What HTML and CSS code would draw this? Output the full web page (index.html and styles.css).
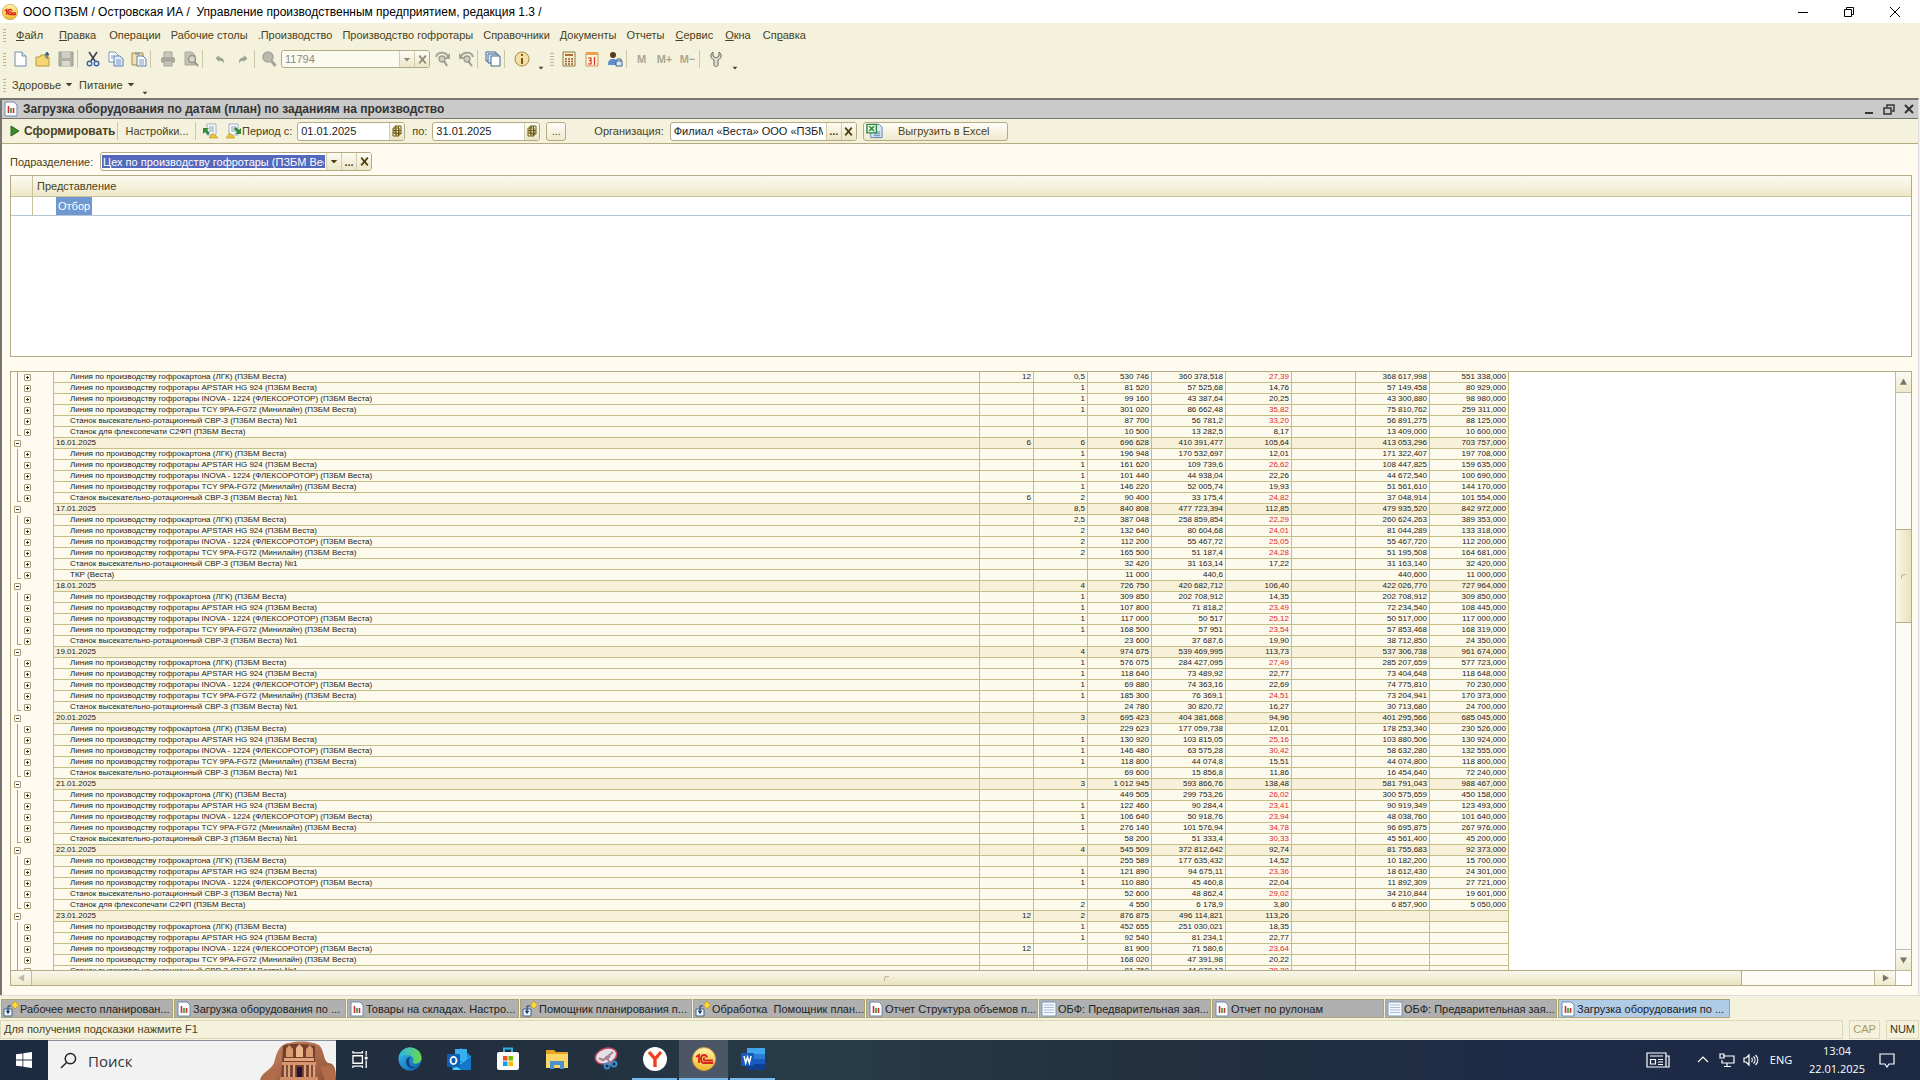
FILE: index.html
```html
<!DOCTYPE html>
<html lang="ru">
<head>
<meta charset="utf-8">
<title>Управление производственным предприятием, редакция 1.3</title>
<link rel="stylesheet" href="styles.css">
</head>
<body>
<svg class="sprite" aria-hidden="true">
  <defs>
    <linearGradient id="gold" x1="0" y1="0" x2="0" y2="1"><stop offset="0" stop-color="#fff3b0"/><stop offset="1" stop-color="#f0b92c"/></linearGradient>
    <linearGradient id="edgeBlue" x1="0" y1="0" x2="1" y2="1"><stop offset="0" stop-color="#35c1f1"/><stop offset="1" stop-color="#0c59a4"/></linearGradient>
    <linearGradient id="edgeGreen" x1="0" y1="0" x2="1" y2="0"><stop offset="0" stop-color="#2fb7e9"/><stop offset="1" stop-color="#6ad84a"/></linearGradient>
    <linearGradient id="rock" x1="0" y1="0" x2="1" y2="1"><stop offset="0" stop-color="#c98560"/><stop offset="1" stop-color="#8f5238"/></linearGradient>
  </defs>
  <symbol id="i-1c" viewBox="0 0 24 24"><circle cx="12" cy="12" r="11.500" fill="url(#gold)" stroke="#c99a35" stroke-width="1"/><path d="M4 10l3-2v8M15 10.500c-.4-1.600-1.500-2.500-2.800-2.500-2 0-3.200 1.700-3.200 4s1.300 4 3.200 4h9M13 11.200c-1.600-.6-1.800 2.300 0 2.300h8" fill="none" stroke="#d8261c" stroke-width="1.900"/></symbol>
  <symbol id="i-doc" viewBox="0 0 16 16"><path d="M3 1h7l4 4v10H3z" fill="#fff" stroke="#6f8cb0"/><path d="M10 1v4h4" fill="#d6e3f3" stroke="#6f8cb0"/></symbol>
  <symbol id="i-open" viewBox="0 0 16 16"><path d="M1 6h4l1-2h4v2h4v9H1z" fill="#f4d774" stroke="#b89a3c"/><path d="M12 8V3M10 4l2-3 2 3z" fill="#3b5f85" stroke="#3b5f85"/></symbol>
  <symbol id="i-save" viewBox="0 0 16 16"><path d="M1 1h14v14H1z" fill="#b0b0a6" stroke="#9c9c90"/><path d="M4 1h8v6H4z" fill="#cfcfc5"/><path d="M4 10h8v5H4z" fill="#d8d8ce"/></symbol>
  <symbol id="i-cut" viewBox="0 0 16 16"><path d="M4 1l6 9M12 1L6 10" stroke="#3c4656" stroke-width="1.600" fill="none"/><circle cx="4.500" cy="12.500" r="2.300" fill="none" stroke="#3567a8" stroke-width="1.400"/><circle cx="11.500" cy="12.500" r="2.300" fill="none" stroke="#3567a8" stroke-width="1.400"/></symbol>
  <symbol id="i-copy" viewBox="0 0 16 16"><path d="M1 1h6l3 3v7H1z" fill="#fff" stroke="#7b98bd"/><path d="M6 5h6l3 3v7H6z" fill="#e6eefa" stroke="#5a7fb0"/><path d="M8 9h5M8 11h5M8 13h5M3 5h3M3 7h2" stroke="#7b98bd"/></symbol>
  <symbol id="i-paste" viewBox="0 0 16 16"><path d="M1 2h11v12H1z" fill="#f0e2b4" stroke="#a98a3c"/><path d="M4 1h5v3H4z" fill="#9aa5b5"/><path d="M6 5h6l3 3v7H6z" fill="#fff" stroke="#5a7fb0"/><path d="M8 9h5M8 11h5M8 13h5" stroke="#7b98bd"/></symbol>
  <symbol id="i-print" viewBox="0 0 16 16"><path d="M4 1h8v6H4z" fill="#c9c9be" stroke="#a3a398"/><rect x="1" y="6" width="14" height="6" rx="2" fill="#a8a89d"/><path d="M4 10h8v5H4z" fill="#c3c3b7" stroke="#a3a398"/></symbol>
  <symbol id="i-preview" viewBox="0 0 16 16"><path d="M2 1h7l3 3v10H2z" fill="#c3c3b6" stroke="#a8a89c"/><circle cx="9" cy="8" r="3.500" fill="#d6d6ca" stroke="#96968a" stroke-width="1.500"/><path d="M11.500 11l3.500 4" stroke="#96968a" stroke-width="2"/></symbol>
  <symbol id="i-undo" viewBox="0 0 16 16"><path d="M2 7l5-4v3c5 0 7 3 6 8-1-3-3-4-6-4v2z" fill="#9aa58c"/></symbol>
  <symbol id="i-redo" viewBox="0 0 16 16"><path d="M14 7L9 3v3c-5 0-7 3-6 8 1-3 3-4 6-4v2z" fill="#9aa58c"/></symbol>
  <symbol id="i-find" viewBox="0 0 16 16"><circle cx="7" cy="6" r="5" fill="#b9b9ad" stroke="#a5a59a" stroke-width="1.500"/><path d="M10.500 10l4 5" stroke="#a5a59a" stroke-width="3"/></symbol>
  <symbol id="i-findnext" viewBox="0 0 16 16"><circle cx="7" cy="8" r="3" fill="#d0d0c4" stroke="#9a9a8e" stroke-width="1.300"/><path d="M9 10l3 5" stroke="#9a9a8e" stroke-width="2"/><path d="M1 6c1-5 9-6 12-1" fill="none" stroke="#a2a698" stroke-width="2"/><path d="M15 2v6H9z" fill="#a2a698"/></symbol>
  <symbol id="i-findprev" viewBox="0 0 16 16"><circle cx="9" cy="8" r="3" fill="#d0d0c4" stroke="#9a9a8e" stroke-width="1.300"/><path d="M10 10l4 5" stroke="#9a9a8e" stroke-width="2"/><path d="M15 6C14 1 6 0 3 5" fill="none" stroke="#a2a698" stroke-width="2"/><path d="M1 2v6h6z" fill="#a2a698"/></symbol>
  <symbol id="i-windows" viewBox="0 0 16 16"><path d="M1 1h10v9H1z" fill="#eef4fb" stroke="#41658f"/><path d="M3 3h10v9H3z" fill="#dce9f7" stroke="#41658f"/><path d="M6 5h9v10H6z" fill="#fff" stroke="#41658f"/></symbol>
  <symbol id="i-info" viewBox="0 0 16 16"><circle cx="8" cy="8" r="7" fill="#f6dfa4" stroke="#a8893c"/><path d="M8 3v2M8 7v6" stroke="#7a5a16" stroke-width="2"/></symbol>
  <symbol id="i-calc" viewBox="0 0 16 16"><path d="M2 1h12v14H2z" fill="#f8f0cc" stroke="#8a7a3a"/><path d="M4 3h8v2H4z" fill="#b36a3a"/><path d="M4 8h8M4 10.500h8M4 13h8" stroke="#8a4a2a" stroke-width="1.400" stroke-dasharray="1.800 1.300"/></symbol>
  <symbol id="i-cal" viewBox="0 0 16 16"><path d="M2 2h12v13H2z" fill="#fff4dc" stroke="#d3954c"/><path d="M2 1h12v3H2z" fill="#e8a450"/><path d="M4 7h3v2.500H5M7 9v4H4M10.500 6v8" stroke="#d03020" fill="none" stroke-width="1.200"/></symbol>
  <symbol id="i-user" viewBox="0 0 16 16"><circle cx="6" cy="4" r="3" fill="#5a3a1c"/><path d="M1 14c0-5 2-6 5-6s5 1 5 6z" fill="#5a8fcc"/><path d="M9 10h6v5H9z" fill="#d8e6f5" stroke="#41658f"/><path d="M10 10V8h4v2" stroke="#41658f" fill="none"/></symbol>
  <symbol id="i-wrench" viewBox="0 0 16 16"><path d="M5 1v4l3 2 3-2V1c3 2 3 6-1 8v5c0 2-4 2-4 0V9C2 7 2 3 5 1z" fill="#deded4" stroke="#6a6a60"/></symbol>
  <symbol id="i-report" viewBox="0 0 16 16"><path d="M2 1h9l3 3v11H2z" fill="#fff" stroke="#6f8cb0"/><path d="M5.500 5v7" stroke="#d22c2c" stroke-width="1.600"/><path d="M8 7v5" stroke="#2f9a3c" stroke-width="1.600"/><path d="M10.500 7v5" stroke="#d22c2c" stroke-width="1.600"/></symbol>
  <symbol id="i-list" viewBox="0 0 16 16"><path d="M1 1h14v14H1z" fill="#f4f8fd" stroke="#7b98bd"/><path d="M3 4h10M3 6.500h10M3 9h10M3 11.500h10" stroke="#a9bdd6"/></symbol>
  <symbol id="i-proc" viewBox="0 0 16 16"><path d="M1 8h8v7H1z" fill="#eef4fb" stroke="#41658f"/><path d="M5 5v6M3.500 10l1.500 2.500L6.500 10zM5 5h3" stroke="#1f3c66" fill="#1f3c66"/><path d="M12 0l3.500 4L12 8 8.500 4z" fill="#ffd93b" stroke="#b8912a" stroke-width=".8"/></symbol>
  <symbol id="i-play" viewBox="0 0 10 12"><path d="M1 1l8 5-8 5z" fill="#3c8a2a" stroke="#2c641e"/></symbol>
  <symbol id="i-load" viewBox="0 0 16 16"><path d="M5 1h9v11H5z" fill="#f7fbff" stroke="#9ab0c8"/><path d="M7 4h5M7 6h5M7 8h5" stroke="#8aa0b8"/><path d="M1 5h6L5 7l3 3-2 2-3-3-2 2z" fill="#2f8a3c"/><path d="M7 15l4-5 5 5z" fill="#f2c230" stroke="#b98d1a" stroke-width=".6"/></symbol>
  <symbol id="i-store-settings" viewBox="0 0 16 16"><path d="M3 1h9v11H3z" fill="#f7fbff" stroke="#9ab0c8"/><path d="M5 4h5M5 6h5M5 8h5" stroke="#8aa0b8"/><path d="M15 11H9l2-2-3-3 2-2 3 3 2-2z" fill="#2f8a3c"/><path d="M0 15l4-5 5 5z" fill="#f2c230" stroke="#b98d1a" stroke-width=".6"/></symbol>
  <symbol id="i-grid" viewBox="0 0 10 12"><path d="M3 1h6v8H3zM1 3h6v8H1zM1 5.500h8M1 8h8M4 1v10M6.500 1v10" fill="none" stroke="#6b5a10" stroke-width="1"/></symbol>
  <symbol id="i-x" viewBox="0 0 10 10"><path d="M2 1.500l6 7M8 1.500l-6 7" stroke="currentColor" stroke-width="1.600"/></symbol>
  <symbol id="i-down" viewBox="0 0 10 6"><path d="M1 1h8L5 5.500z" fill="currentColor"/></symbol>
  <symbol id="i-excel" viewBox="0 0 18 16"><path d="M7 1h7l3 3v11H5V5" fill="#dfeaf8" stroke="#5a7fb0"/><path d="M8 9h7M8 11h7M8 13h7" stroke="#5a7fb0"/><path d="M1 1h10v9H1z" fill="#e3f3e0" stroke="#2f8a3c" stroke-width="1.500"/><path d="M3.500 3l5 5M8.500 3l-5 5" stroke="#2f8a3c" stroke-width="1.600"/></symbol>
</svg>

<header class="titlebar">
  <svg class="ico16"><use href="#i-1c"/></svg>
  <h1>ООО ПЗБМ / Островская ИА /&nbsp; Управление производственным предприятием, редакция 1.3 /</h1>
  <div class="winbtns">
    <button aria-label="Свернуть"><svg viewBox="0 0 10 10"><path d="M0 5.500h10"/></svg></button>
    <button aria-label="Восстановить"><svg viewBox="0 0 10 10"><path d="M.5 2.500h7v7h-7zM2.500 2.500v-2h7v7h-2"/></svg></button>
    <button aria-label="Закрыть"><svg viewBox="0 0 10 10"><path d="M0 0l10 10M10 0L0 10"/></svg></button>
  </div>
</header>

<nav class="menubar">
  <button class="first"><u>Ф</u>айл</button><button class="first"><u>П</u>равка</button><button>Операции</button><button>Рабочие столы</button><button>.Производство</button><button>Производство гофротары</button><button>Справочники</button><button><u>Д</u>окументы</button><button>Отчеты</button><button class="accel"><u>С</u>ервис</button><button class="accel"><u>О</u>кна</button><button class="accel">Сп<u>р</u>авка</button>
</nav>

<div class="toolbar">
  <button aria-label="Новый"><svg><use href="#i-doc"/></svg></button>
  <button aria-label="Открыть"><svg><use href="#i-open"/></svg></button>
  <button aria-label="Сохранить"><svg><use href="#i-save"/></svg></button>
  <i class="sep"></i>
  <button aria-label="Вырезать"><svg><use href="#i-cut"/></svg></button>
  <button aria-label="Копировать"><svg><use href="#i-copy"/></svg></button>
  <button aria-label="Вставить"><svg><use href="#i-paste"/></svg></button>
  <i class="sep wide"></i>
  <button aria-label="Печать"><svg><use href="#i-print"/></svg></button>
  <button aria-label="Просмотр"><svg><use href="#i-preview"/></svg></button>
  <i class="sep wide"></i>
  <button aria-label="Отменить"><svg class="small"><use href="#i-undo"/></svg></button>
  <button aria-label="Вернуть"><svg class="small"><use href="#i-redo"/></svg></button>
  <i class="sep"></i>
  <button class="narrow" aria-label="Найти"><svg><use href="#i-find"/></svg></button>
  <div class="field search"><input aria-label="Поиск" value="11794" disabled><button aria-label="Список" disabled><svg class="dd"><use href="#i-down"/></svg></button><button aria-label="Очистить" disabled><svg class="x"><use href="#i-x"/></svg></button></div>
  <button aria-label="Найти далее"><svg><use href="#i-findnext"/></svg></button>
  <button aria-label="Найти ранее"><svg><use href="#i-findprev"/></svg></button>
  <i class="sep"></i>
  <button aria-label="Окна"><svg><use href="#i-windows"/></svg></button>
  <i class="sep wide"></i>
  <button aria-label="Справка"><svg><use href="#i-info"/></svg></button>
  <button class="more" aria-label="Ещё"><svg class="dd"><use href="#i-down"/></svg></button>
  <i class="grip"></i>
  <button aria-label="Калькулятор"><svg><use href="#i-calc"/></svg></button>
  <button aria-label="Календарь"><svg><use href="#i-cal"/></svg></button>
  <button aria-label="Пользователь"><svg><use href="#i-user"/></svg></button>
  <i class="sep"></i>
  <button class="mem">M</button><button class="mem">M+</button><button class="mem">M−</button>
  <i class="sep wide"></i>
  <button class="narrow" aria-label="Сервис"><svg><use href="#i-wrench"/></svg></button>
  <button class="more" aria-label="Ещё"><svg class="dd"><use href="#i-down"/></svg></button>
</div>

<div class="quickbar">
  <button>Здоровье <svg class="dd"><use href="#i-down"/></svg></button><button>Питание <svg class="dd"><use href="#i-down"/></svg></button><button class="more" aria-label="Ещё"><svg class="dd"><use href="#i-down"/></svg></button>
</div>

<main class="window">
  <header class="window-title">
    <svg class="ico16"><use href="#i-report"/></svg>
    <h2>Загрузка оборудования по датам (план) по заданиям на производство</h2>
    <div class="mdibtns">
      <button aria-label="Свернуть"><svg viewBox="0 0 12 12"><path d="M2 10h8"/></svg></button>
      <button aria-label="Восстановить"><svg class="thin" viewBox="0 0 12 12"><path d="M1 5h7v6H1zM4 4V2h7v6H9"/></svg></button>
      <button aria-label="Закрыть"><svg viewBox="0 0 12 12"><path d="M2 2l8 8M10 2l-8 8"/></svg></button>
    </div>
  </header>

  <form class="commands">
    <button type="button" class="run"><svg><use href="#i-play"/></svg>Сформировать</button>
    <i class="sep"></i>
    <button type="button" class="settings">Настройки...</button>
    <i class="sep"></i>
    <button type="button" class="tool" aria-label="Загрузить"><svg class="ico16"><use href="#i-load"/></svg></button>
    <button type="button" class="tool last" aria-label="Сохранить"><svg class="ico16"><use href="#i-store-settings"/></svg></button>
    <label for="from">Период с:</label>
    <div class="field date"><input id="from" value="01.01.2025"><button type="button" aria-label="Выбрать дату"><svg class="cal"><use href="#i-grid"/></svg></button></div>
    <label for="to" class="to">по:</label>
    <div class="field date"><input id="to" value="31.01.2025"><button type="button" aria-label="Выбрать дату"><svg class="cal"><use href="#i-grid"/></svg></button></div>
    <button type="button" class="push dots">...</button>
    <label for="org">Организация:</label>
    <div class="field org"><input id="org" value="Филиал «Веста» ООО «ПЗБМ»"><button type="button">...</button><button type="button" aria-label="Очистить"><svg class="x"><use href="#i-x"/></svg></button></div>
    <button type="button" class="push excel"><svg><use href="#i-excel"/></svg><span>Выгрузить в Excel</span></button>
  </form>

  <div class="body">
    <div class="filter">
      <label for="dep">Подразделение:</label>
      <div class="field dep"><input id="dep" value="Цех по производству гофротары (ПЗБМ Веста)"><button type="button" aria-label="Список"><svg class="dd"><use href="#i-down"/></svg></button><button type="button">...</button><button type="button" aria-label="Очистить"><svg class="x"><use href="#i-x"/></svg></button></div>
    </div>

    <div class="selection">
      <table>
        <thead><tr><th class="mark"></th><th>Представление</th></tr></thead>
        <tbody><tr><td class="mark"></td><td><span>Отбор</span></td></tr></tbody>
      </table>
    </div>

    <section class="report">
      <div class="sheet">
        <table>
          <colgroup><col class="c-tree"><col class="c-name"><col class="c-a"><col class="c-a"><col class="c-b"><col class="c-c"><col class="c-d"><col class="c-b"><col class="c-c"><col class="c-e"></colgroup>
          <tbody id="rows"></tbody>
        </table>
      </div>
      <div class="vscroll"><button aria-label="Вверх"><svg viewBox="0 0 8 8"><path d="M4 0l4 7H0z"/></svg></button><i class="before"></i><i class="thumb"></i><i class="after"></i><button aria-label="Вниз"><svg viewBox="0 0 8 8"><path d="M4 8l4-7H0z"/></svg></button></div>
      <div class="hscroll"><button class="off" aria-label="Влево"><svg viewBox="0 0 8 8"><path d="M0 4l7-4v8z"/></svg></button><i class="thumb"></i><i class="track"></i><button aria-label="Вправо"><svg viewBox="0 0 8 8"><path d="M8 4L1 0v8z"/></svg></button></div>
      <i class="corner"></i>
    </section>
  </div>
</main>

<nav class="tabs">
  <button><svg><use href="#i-proc"/></svg>Рабочее место планирован...</button>
  <button><svg><use href="#i-report"/></svg>Загрузка оборудования по ...</button>
  <button><svg><use href="#i-report"/></svg>Товары на складах. Настро...</button>
  <button><svg><use href="#i-proc"/></svg>Помощник планирования п...</button>
  <button><svg><use href="#i-proc"/></svg>Обработка&nbsp; Помощник план...</button>
  <button><svg><use href="#i-report"/></svg>Отчет Структура объемов п...</button>
  <button><svg><use href="#i-list"/></svg>ОБФ: Предварительная зая...</button>
  <button><svg><use href="#i-report"/></svg>Отчет по рулонам</button>
  <button><svg><use href="#i-list"/></svg>ОБФ: Предварительная зая...</button>
  <button class="current"><svg><use href="#i-report"/></svg>Загрузка оборудования по ...</button>
</nav>

<div class="status"><p>Для получения подсказки нажмите F1</p><span class="off">CAP</span><span>NUM</span></div>

<footer class="taskbar">
  <button class="start" aria-label="Пуск"><svg viewBox="0 0 16 16"><path d="M0 2.300l6.500-.9v6.200H0zM7.300 1.300L16 0v7.600H7.300zM0 8.400h6.500v6.200L0 13.700zM7.300 8.400H16V16l-8.700-1.300z" fill="#fff"/></svg></button>
  <div class="tasksearch">
    <svg class="lens" viewBox="0 0 18 18"><circle cx="11" cy="7" r="5.500"/><path d="M7 11l-6 6"/></svg>
    <input aria-label="Поиск" placeholder="Поиск">
    <svg class="art" viewBox="0 0 76 39"><path d="M0 39c2-8 10-9 14-17C17 10 20 2 30 2c9-3 26-1 30 3 5 8 3 13 8 17 6 0 8 5 8 17z" fill="url(#rock)"/><path d="M23 5c6-3 20-3 32 0v34H21z" fill="#74402c"/><path d="M24 17h30v3H24z" fill="#e2a57c"/><path d="M22 21h34v3H22z" fill="#d9966e"/><path d="M26 8l3-4 4 4v8h-7zM46 8l4-4 3 4v8h-7z" fill="#d99a72"/><path d="M36 7l3.500-4L43 7v9h-7z" fill="#efb58b"/><path d="M25 24v12M29 24v12M34 24v12M45 24v12M50 24v12M54 24v12" stroke="#dda27b" stroke-width="2.300"/><path d="M20 36h38v3H20z" fill="#d08f68"/><path d="M37 26h5v10h-5z" fill="#25133c"/><path d="M3 39c5-7 9-8 13-16v16zM60 26l5 13h10c0-9-1-13-5-15z" fill="#b26c4a"/></svg>
  </div>
  <div class="apps">
    <button aria-label="Представление задач"><svg class="view" viewBox="0 0 18 18"><path d="M1 5h10v8H1zM1 0v2h10V0M1 18v-2h10v2M15 0v5M15 10v8" fill="none" stroke="#fff" stroke-width="1.400"/><path d="M13.500 6h3v3h-3z" fill="#fff"/></svg></button>
    <button aria-label="Edge"><svg viewBox="0 0 24 24"><circle cx="12" cy="12" r="11.500" fill="url(#edgeBlue)"/><path d="M1 11C2 3 8 .5 12 .5c7 0 12 5 11.500 11-.5 5-6 6-9 4.500 3-5-1-8-5-8-4 0-7 1-8.500 3z" fill="url(#edgeGreen)"/><path d="M8 14c0 5 4 9 11 6-6 1-8-2-8-6 0-2 1-3 2-4-3 0-5 2-5 4z" fill="#123f7c"/></svg></button>
    <button aria-label="Outlook"><svg viewBox="0 0 24 24"><path d="M5 9l9-8 10 8v13H5z" fill="#1a86d8"/><path d="M8 2h12v12H8z" fill="#37b0f0"/><path d="M24 9v14H5l10-8z" fill="#50d0ff"/><path d="M24 9L10 20l4 3h10z" fill="#1279c9"/><rect y="7" width="13" height="13" rx="1" fill="#0f5fb4"/><ellipse cx="6.500" cy="13.500" rx="3" ry="3.600" fill="none" stroke="#fff" stroke-width="1.800"/></svg></button>
    <button aria-label="Магазин"><svg viewBox="0 0 24 24"><path d="M8 6V1.500h8V6" fill="none" stroke="#2fb1e6" stroke-width="2"/><rect x="1" y="5" width="22" height="18" rx="2" fill="#fafafa"/><path d="M7 9h4.500v4.500H7z" fill="#f25022"/><path d="M12.500 9H17v4.500h-4.500z" fill="#7fba00"/><path d="M7 14.500h4.500V19H7z" fill="#00a4ef"/><path d="M12.500 14.500H17V19h-4.500z" fill="#ffb900"/></svg></button>
    <button aria-label="Проводник"><svg viewBox="0 0 24 24"><path d="M1 3h8l2 2h12v16H1z" fill="#e3a523"/><path d="M1 7h22v14H1z" fill="#fcd667"/><path d="M5 22v-8h14v8h-4v-4H9v4z" fill="#4b93cf"/></svg></button>
    <button aria-label="Ножницы"><svg viewBox="0 0 24 24"><ellipse cx="12" cy="9" rx="11" ry="7.500" transform="rotate(-20 12 9)" fill="#e4e2e8" stroke="#c8475c" stroke-width="1.500"/><path d="M5 11c3 3 8 2 11-2M8 14L19 5M12 9l5 9" fill="none" stroke="#a8808e" stroke-width="2"/><circle cx="13" cy="19" r="2.500" fill="none" stroke="#3a8bd0" stroke-width="1.800"/><circle cx="20" cy="17" r="2.500" fill="none" stroke="#3a8bd0" stroke-width="1.800"/></svg></button>
    <button class="open" aria-label="Яндекс Браузер"><svg viewBox="0 0 24 24"><circle cx="12" cy="12" r="12" fill="#fff"/><path d="M6 5l6 7v8M18 5l-6 7" fill="none" stroke="#f0401c" stroke-width="3.400"/></svg></button>
    <button class="open active" aria-label="1С:Предприятие"><svg><use href="#i-1c"/></svg></button>
    <button class="open" aria-label="Word"><svg viewBox="0 0 24 24"><path d="M6 1h18v6H6z" fill="#41a5ee"/><path d="M6 7h18v5H6z" fill="#2b7cd3"/><path d="M6 12h18v5H6z" fill="#185abd"/><path d="M6 17h18v6H6z" fill="#103f91"/><rect y="6" width="13" height="13" rx="1" fill="#185abd"/><path d="M3 9l1.700 7L6.500 10l1.800 6L10 9" fill="none" stroke="#fff" stroke-width="1.500"/></svg></button>
  </div>
  <div class="tray">
    <button class="news" aria-label="Новости"><svg viewBox="0 0 24 16"><path d="M1 1h19v14H1zM20 4h3v11h-4M4 4h13M12 7.500h5M12 10h5M12 12.500h5M4.500 7.500h5v4.500h-5z"/></svg></button>
    <button aria-label="Скрытые значки"><svg viewBox="0 0 16 16"><path d="M3 10l5-5 5 5"/></svg></button>
    <button aria-label="Сеть"><svg viewBox="0 0 16 16"><path d="M4 4h11v7H3V8M8 11v3M5 14.500h7M1 2h4v4H1z"/></svg></button>
    <button aria-label="Громкость"><svg viewBox="0 0 16 16"><path d="M1 6h2l3-3v10l-3-3H1zM8.500 6c1 1 1 3 0 4M10.500 4.500c2 2 2 5 0 7M12.500 3c3 3 3 7 0 10"/></svg></button>
    <span class="lang">ENG</span>
    <time><span>13:04</span><span>22.01.2025</span></time>
    <button class="note" aria-label="Уведомления"><svg viewBox="0 0 16 16"><path d="M1 2h14v10h-5l-2 3-2-3H1z"/></svg></button>
  </div>
</footer>
<script src="report.js"></script>
</body>
</html>
```
FILE: styles.css
```css
* { box-sizing: border-box; }
body {
  margin: 0; height: 100vh; display: flex; flex-direction: column; overflow: hidden;
  background: #f4f1dc; color: #4a4220;
  font: 11px/14px "Liberation Sans", Arial, sans-serif;
}
button, input { font: inherit; color: inherit; margin: 0; padding: 0; border: 0; background: none; }
button { display: flex; align-items: center; justify-content: center; white-space: nowrap; flex: none; }
svg { display: block; flex: none; }
h1, h2, p { margin: 0; font: inherit; }
.sprite { position: absolute; width: 0; height: 0; }
.ico16 { width: 16px; height: 16px; }
.dd { width: 8px; height: 5px; }
.x { width: 11px; height: 11px; }

.titlebar { display: flex; align-items: center; gap: 5px; height: 23px; padding-left: 2px; background: #fff; color: #000; flex: none; }
.titlebar h1 { font-size: 12px; flex: 1; }
.winbtns { display: flex; padding-right: 2px; }
.winbtns button { width: 46px; height: 20px; }
.winbtns svg { width: 10px; height: 10px; fill: none; stroke: #000; overflow: visible; }

.menubar { display: flex; align-items: center; height: 24px; padding-left: 8px; flex: none; }
.menubar button { padding: 0 5px; height: 20px; }
.menubar .first { padding: 0 8px; }
.menubar .accel { padding: 0 6px; }
.menubar, .quickbar, .toolbar {
  background: repeating-linear-gradient(#b9b497 0 1px, transparent 1px 3px) 3px 6px / 3px 13px no-repeat;
}
.toolbar { display: flex; align-items: center; height: 24px; padding-left: 8px; flex: none; }
.toolbar > button { width: 23px; height: 22px; }
.toolbar > .narrow { width: 22px; }
.toolbar > button svg { width: 16px; height: 16px; }
.toolbar > button .small { width: 12px; height: 12px; }
.toolbar > .more, .quickbar .more { width: 15px; align-items: flex-end; }
.toolbar > .more .dd, .quickbar .more .dd { width: 6px; height: 4px; }
.toolbar .mem { color: #aaa68f; font-weight: bold; }
.sep { width: 4px; height: 18px; border-left: 1px solid #cbc6a6; flex: none; }
.sep.wide { width: 6px; }
.grip { width: 4px; height: 13px; margin: 0 3px 0 2px; background: repeating-linear-gradient(#b9b497 0 1px, transparent 1px 3px); }
.quickbar { display: flex; align-items: center; height: 27px; padding: 2px 0 2px 12px; flex: none; background-position: 3px 8px; }
.quickbar button { gap: 4px; margin-right: 6px; height: 20px; }
.quickbar .more { width: 8px; }

.field { display: flex; height: 19px; border: 1px solid #b3ab83; border-radius: 3px; background: #fff; color: #1c1c1c; overflow: hidden; }
.field input { flex: 1; min-width: 0; padding: 0 3px; outline: 0; }
.field button { width: 15px; border-left: 1px solid #d3ccab; background: linear-gradient(#fdfcf4, #ece6c8); color: #4d400a; font-weight: bold; }
.search { width: 149px; height: 18px; margin: 0 1px; background: #fbfaf0; color: #8e8a78; }
.search button { color: #8e8a78; }

.window { flex: 1; min-height: 0; display: flex; flex-direction: column; margin: 0 1px 0 0; border: solid #77766e; border-width: 2px 1px 0 2px; border-right-color: #dcdce0; background: #fffbf0; }
.window-title { display: flex; align-items: center; gap: 4px; height: 19px; padding-left: 1px; border-bottom: 1px solid #77766e; background: #cacaca; color: #333; flex: none; }
.window-title h2 { font-size: 12px; font-weight: bold; flex: 1; }
.mdibtns { display: flex; gap: 8px; padding-right: 3px; }
.mdibtns svg { width: 12px; height: 12px; fill: none; stroke: #333; stroke-width: 2; }
.mdibtns .thin { stroke-width: 1.500; }

.commands { display: flex; align-items: center; height: 25px; padding-left: 8px; border-bottom: 1px solid #b3ab83; background: #f4f1dc; flex: none; }
.run { gap: 4px; width: 107px; font-size: 12px; font-weight: bold; justify-content: flex-start; }
.run svg { width: 10px; height: 12px; }
.settings { width: 70px; margin: 0 3px 0 1px; }
.tool { margin: 0 5px 0 3px; }
.tool.last { margin-right: 0; }
.date { width: 108px; margin-left: 5px; }
.cal { width: 10px; height: 12px; }
.to { margin-left: 7px; }
.push { height: 19px; border: 1px solid #b3ab83; border-radius: 3px; background: linear-gradient(#fefdf8, #efe9cd); }
.dots { width: 20px; margin: 0 28px 0 6px; }
.org { width: 187px; margin: 0 6px; }
.excel { width: 145px; padding: 0 2px; }
.excel svg { width: 17px; height: 16px; }
.excel span { flex: 1; }

.body { flex: 1; min-height: 0; display: flex; flex-direction: column; padding: 8px 6px 9px 8px; }
.filter { display: flex; align-items: center; height: 19px; margin-bottom: 4px; flex: none; }
.filter label { width: 90px; }
.dep { width: 272px; }
.dep input { margin: 2px 1px; padding: 0 1px; background: #5468bd; color: #fff; }

.selection { height: 182px; border: 1px solid #b3ab83; background: #fff; flex: none; }
.selection table { width: 100%; border-spacing: 0; table-layout: fixed; }
.selection th { height: 21px; padding: 0 4px; text-align: left; font-weight: normal; border-bottom: 1px solid #c9c19a; background: linear-gradient(#fbfaf1, #eee8c8); }
.selection td { height: 19px; padding: 0 0 0 23px; border-bottom: 1px solid #b6c6d8; }
.selection td span { display: inline-block; padding: 2px; line-height: 14px; background: #6f97d0; color: #fff; }
.selection .mark { width: 22px; padding: 0; border-right: 1px solid #c9c19a; }

.report { flex: 1; min-height: 0; margin-top: 14px; display: grid; grid-template: minmax(0, 1fr) 15px / minmax(0, 1fr) 16px; border: 1px solid #b3ab83; background: #fff; }
.sheet { overflow: hidden; background: linear-gradient(90deg, #fffbf0 42px, #fff 42px); }
.sheet table { width: 1498px; table-layout: fixed; border-spacing: 0; font-size: 8px; line-height: 10px; color: #222; }
.c-tree { width: 43px; } .c-name { width: 926px; } .c-a { width: 54px; } .c-b { width: 64px; }
.c-c { width: 74px; } .c-d { width: 66px; } .c-e { width: 79px; }
.sheet td { height: 11px; padding: 0 2px 0 0; border: solid #c6bd85; border-width: 0 1px 1px 0; background: #fcfaec; text-align: right; white-space: nowrap; overflow: hidden; }
.sheet td.name { text-align: left; padding-left: 16px; }
.sheet .group td { background: #f7f1da; }
.sheet .group td.name { padding-left: 2px; }
.sheet .red { color: #e3262e; }
.sheet tr td.tree { padding: 0; border-bottom: 0; background: #fffbf0; }
.branch { display: flex; height: 11px; padding-left: 3px; align-items: flex-end; }
.rail { width: 4px; height: 11px; margin: 0 3px; border-left: 1px solid #a9a27c; align-self: flex-start; }
.rail.end { height: 9px; border-bottom: 1px solid #a9a27c; }
.toggle { width: 7px; height: 7px; margin-bottom: 2px; border: 1px solid #a39c72; border-radius: 1px; background: linear-gradient(#333, #333) center / 3px 1px no-repeat, #fff; }
.toggle.plus { background: linear-gradient(#333, #333) center / 3px 1px no-repeat, linear-gradient(#333, #333) center / 1px 3px no-repeat, #fff; }

.vscroll { display: flex; flex-direction: column; border-left: 1px solid #c1bb9b; background: #fbfaf5; }
.vscroll button, .hscroll button { background: linear-gradient(#fbfaf4, #eeeacb); }
.vscroll button { height: 21px; border-bottom: 1px solid #c1bb9b; }
.vscroll button:last-child { border-width: 1px 0 0; border-style: solid; border-color: #c1bb9b; }
.vscroll svg, .hscroll svg { width: 7px; height: 8px; fill: #77756a; }
.vscroll .before { flex: 137; }
.vscroll .after { flex: 328; }
.vscroll .thumb { flex: 92; border: solid #b3ab83; border-width: 1px 0; background: linear-gradient(90deg, #f9f7e6, #e8e4bc); }
.hscroll { display: flex; border-top: 1px solid #b3ab83; background: #fbfaf5; }
.hscroll button { width: 21px; border-right: 1px solid #c1bb9b; }
.hscroll button:last-child { border-left: 1px solid #c1bb9b; border-right: 0; }
.hscroll .off svg { fill: #bdb9a5; }
.hscroll .thumb { flex: 1711; border-right: 1px solid #b3ab83; background: linear-gradient(#f9f7ec, #e9e3bf); }
.thumb::after { content: ""; display: block; width: 4px; height: 4px; border: solid #bdb795; border-width: 1px 0 0 1px; border-radius: 3px 0 0 0; }
.thumb { display: flex; align-items: center; justify-content: center; }
.hscroll .track { flex: 132; }
.corner { border: solid #c1bb9b; border-width: 1px 0 0 1px; }

.tabs { display: flex; gap: 1px; height: 25px; padding: 3px 0 2px 1px; border-top: 1px solid #dcdce0; flex: none; }
.tabs button { width: 172px; gap: 1px; padding-left: 1px; justify-content: flex-start; border: 1px solid #aaa478; background: #b0b0b0; color: #222; overflow: hidden; }
.tabs svg { width: 16px; height: 16px; }
.tabs .current { background: #b0cbe6; }
.status { display: flex; gap: 6px; height: 20px; padding: 0 1px 1px 0; flex: none; }
.status p { flex: 1; padding: 1px 3px; border: 1px solid #ddd8b8; }
.status span { padding: 1px 3px; border: 1px solid #ddd8b8; color: #3a3418; }
.status .off { color: #a99b62; }

.taskbar { display: flex; height: 40px; flex: none; color: #fff; background: linear-gradient(90deg, #1c2a42, #22303f 30%, #283c48 42%, #22303f 60%, #1e2b48 82%, #1c2942); font-family: "Open Sans", sans-serif; }
.start { width: 48px; }
.start svg { width: 16px; height: 16px; }
.tasksearch { width: 288px; display: flex; align-items: center; padding-left: 12px; background: #f2f2f2; border-top: 1px solid #8b919b; }
.lens { width: 17px; height: 17px; fill: none; stroke: #222; stroke-width: 1.500; }
.tasksearch input { flex: 1; min-width: 0; padding-left: 11px; font-size: 15px; line-height: 20px; }
.tasksearch input::placeholder { color: #333; opacity: 1; }
.art { width: 76px; height: 39px; }
.apps { display: flex; flex: 1; }
.apps button { width: 49px; border-bottom: 2px solid transparent; }
.apps svg { width: 24px; height: 24px; }
.apps .view { width: 17px; height: 17px; }
.apps .open { border-image: linear-gradient(90deg, transparent 4px, #76b9ed 4px 45px, transparent 45px) 2; }
.apps .active { border-image: none; border-bottom-color: #76b9ed; background: #4b5767; }
.tray { display: flex; align-items: center; padding-right: 21px; }
.tray button { width: 24px; height: 40px; }
.tray svg { width: 16px; height: 16px; fill: none; stroke: #fff; stroke-width: 1.200; }
.tray .news { width: 24px; margin-right: 21px; }
.tray .news svg { width: 24px; height: 16px; }
.lang { width: 36px; text-align: center; }
time { width: 76px; display: flex; flex-direction: column; line-height: 18px; text-align: center; }
```
FILE: report.js
```js
const LGK = 'Линия по производству гофрокартона (ЛГК) (ПЗБМ Веста)';
const APS = 'Линия по производству гофротары APSTAR HG 924 (ПЗБМ Веста)';
const INO = 'Линия по производству гофротары INOVA - 1224 (ФЛЕКСОРОТОР) (ПЗБМ Веста)';
const TCY = 'Линия по производству гофротары TCY 9PA-FG72 (Минилайн) (ПЗБМ Веста)';
const SVR = 'Станок высекательно-ротационный СВР-3 (ПЗБМ Веста) №1';
const FLX = 'Станок для флексопечати С2ФП (ПЗБМ Веста)';
const TKR = 'ТКР (Веста)';

// Columns: name | a | b | plan | area | load (! = over the limit) | blank | fact area | fact
const rows = [
  [LGK, '12|0,5|530 746|360 378,518|!27,39||368 617,998|551 338,000'],
  [APS, '|1|81 520|57 525,68|14,76||57 149,458|80 929,000'],
  [INO, '|1|99 160|43 387,64|20,25||43 300,880|98 980,000'],
  [TCY, '|1|301 020|86 662,48|!35,82||75 810,762|259 311,000'],
  [SVR, '||87 700|56 781,2|!33,20||56 891,275|88 125,000'],
  [FLX, '||10 500|13 282,5|8,17||13 409,000|10 600,000'],
  ['16.01.2025', '6|6|696 628|410 391,477|105,64||413 053,296|703 757,000'],
  [LGK, '|1|196 948|170 532,697|12,01||171 322,407|197 708,000'],
  [APS, '|1|161 620|109 739,6|!26,62||108 447,825|159 635,000'],
  [INO, '|1|101 440|44 938,04|22,26||44 672,540|100 690,000'],
  [TCY, '|1|146 220|52 005,74|19,93||51 561,610|144 170,000'],
  [SVR, '6|2|90 400|33 175,4|!24,82||37 048,914|101 554,000'],
  ['17.01.2025', '|8,5|840 808|477 723,394|112,85||479 935,520|842 972,000'],
  [LGK, '|2,5|387 048|258 859,854|!22,29||260 624,263|389 353,000'],
  [APS, '|2|132 640|80 604,68|!24,01||81 044,289|133 318,000'],
  [INO, '|2|112 200|55 467,72|!25,05||55 467,720|112 200,000'],
  [TCY, '|2|165 500|51 187,4|!24,28||51 195,508|164 681,000'],
  [SVR, '||32 420|31 163,14|17,22||31 163,140|32 420,000'],
  [TKR, '||11 000|440,6|||440,600|11 000,000'],
  ['18.01.2025', '|4|726 750|420 682,712|106,40||422 026,770|727 964,000'],
  [LGK, '|1|309 850|202 708,912|14,35||202 708,912|309 850,000'],
  [APS, '|1|107 800|71 818,2|!23,49||72 234,540|108 445,000'],
  [INO, '|1|117 000|50 517|!25,12||50 517,000|117 000,000'],
  [TCY, '|1|168 500|57 951|!23,54||57 853,468|168 319,000'],
  [SVR, '||23 600|37 687,6|19,90||38 712,850|24 350,000'],
  ['19.01.2025', '|4|974 675|539 469,995|113,73||537 306,738|961 674,000'],
  [LGK, '|1|576 075|284 427,095|!27,49||285 207,659|577 723,000'],
  [APS, '|1|118 640|73 489,92|22,77||73 404,648|118 648,000'],
  [INO, '|1|69 880|74 363,16|22,69||74 775,810|70 230,000'],
  [TCY, '|1|185 300|76 369,1|!24,51||73 204,941|170 373,000'],
  [SVR, '||24 780|30 820,72|16,27||30 713,680|24 700,000'],
  ['20.01.2025', '|3|695 423|404 381,668|94,96||401 295,566|685 045,000'],
  [LGK, '||229 623|177 059,738|12,01||178 253,340|230 526,000'],
  [APS, '|1|130 920|103 815,05|!25,16||103 880,506|130 924,000'],
  [INO, '|1|146 480|63 575,28|!30,42||58 632,280|132 555,000'],
  [TCY, '|1|118 800|44 074,8|15,51||44 074,800|118 800,000'],
  [SVR, '||69 600|15 856,8|11,86||16 454,640|72 240,000'],
  ['21.01.2025', '|3|1 012 945|593 866,76|138,48||581 791,043|988 467,000'],
  [LGK, '||449 505|299 753,26|!26,02||300 575,659|450 158,000'],
  [APS, '|1|122 460|90 284,4|!23,41||90 919,349|123 493,000'],
  [INO, '|1|106 640|50 918,76|!23,94||48 038,760|101 640,000'],
  [TCY, '|1|276 140|101 576,94|!34,78||96 695,875|267 976,000'],
  [SVR, '||58 200|51 333,4|!30,33||45 561,400|45 200,000'],
  ['22.01.2025', '|4|545 509|372 812,642|92,74||81 755,683|92 373,000'],
  [LGK, '||255 589|177 635,432|14,52||10 182,200|15 700,000'],
  [APS, '|1|121 890|94 675,11|!23,36||18 612,430|24 301,000'],
  [INO, '|1|110 880|45 460,8|22,04||11 892,309|27 721,000'],
  [SVR, '||52 600|48 862,4|!29,02||34 210,844|19 601,000'],
  [FLX, '|2|4 550|6 178,9|3,80||6 857,900|5 050,000'],
  ['23.01.2025', '12|2|876 875|496 114,821|113,26|||'],
  [LGK, '|1|452 655|251 030,021|18,35|||'],
  [APS, '|1|92 540|81 234,1|22,77|||'],
  [INO, '12||81 900|71 580,6|!23,64|||'],
  [TCY, '||168 020|47 391,98|20,22|||'],
  [SVR, '||81 760|44 878,13|!28,28|||']
];

const isGroup = row => row && /^\d/.test(row[0]);

document.getElementById('rows').innerHTML = rows.map((row, i) => {
  const group = isGroup(row);
  const tree = group
    ? '<button class="toggle" aria-label="Свернуть"></button>'
    : `<i class="rail${isGroup(rows[i + 1]) ? ' end' : ''}"></i><button class="toggle plus" aria-label="Развернуть"></button>`;
  const cells = row[1].split('|').map(v =>
    v[0] === '!' ? `<td class="red">${v.slice(1)}</td>` : `<td>${v}</td>`).join('');
  return `<tr class="${group ? 'group' : 'item'}"><td class="tree"><div class="branch">${tree}</div></td><td class="name">${row[0]}</td>${cells}</tr>`;
}).join('');
```
